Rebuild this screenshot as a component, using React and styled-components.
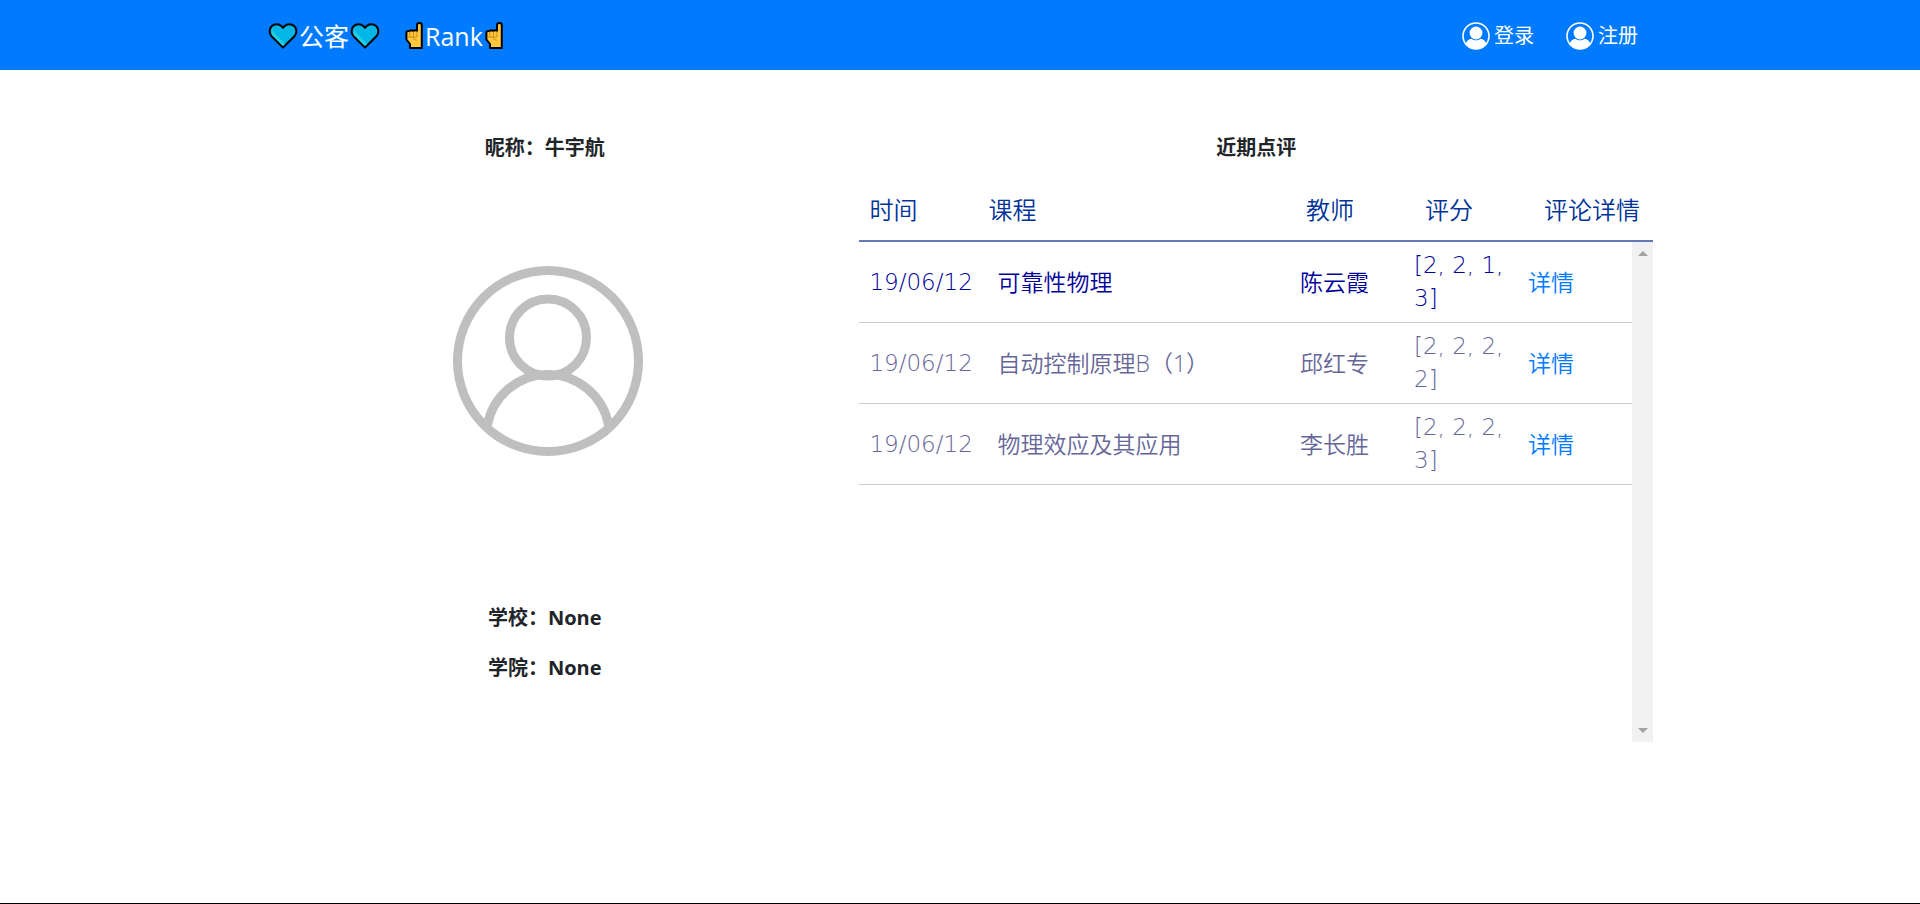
import React from "react";
import styled, { createGlobalStyle } from "styled-components";

const reviews = [
  { date: "19/06/12", course: "可靠性物理", teacher: "陈云霞", score: "[2, 2, 1, 3]", active: true },
  { date: "19/06/12", course: "自动控制原理B（1）", teacher: "邱红专", score: "[2, 2, 2, 2]" },
  { date: "19/06/12", course: "物理效应及其应用", teacher: "李长胜", score: "[2, 2, 2, 3]" },
];

const Heart = () => (
  <svg width="30" height="28" viewBox="0 0 30 28" aria-hidden="true">
    <path
      d="M15 25.5L3.6 14.2C1 11.4 1 6.8 3.6 4.2 6.4 1.4 11 1.5 13.6 4.2L15 5.7l1.4-1.5c2.6-2.7 7.2-2.8 10 0 2.6 2.6 2.6 7.2 0 10z"
      fill="#00b7e8"
      stroke="#000"
      strokeWidth="2"
      strokeLinejoin="round"
    />
    <path d="M4 6c0 4 6 8 13 16l-2 2L4 13z" fill="#25cfdf" />
  </svg>
);

const Finger = () => (
  <svg width="20" height="30" viewBox="0 0 20 30" aria-hidden="true">
    <path
      d="M13 10V4.2c0-3 4.8-3 4.8 0V27H6v-4l-3.6-4.5V12c0-1.6 1.8-2.5 3.2-1.8 1-1 2.7-1 3.6-.2 1-.8 2.6-.8 3.8 0z"
      fill="#ffc83d"
      stroke="#000"
      strokeWidth="2"
      strokeLinejoin="round"
    />
    <path
      d="M5.8 10.5v5.3M9.4 10.5v5.3M13 10v5.8M3.5 16h9.5M9 16c.2 2 1.6 3 3.8 3"
      fill="none"
      stroke="#d08a1c"
      strokeWidth="1"
    />
  </svg>
);

const UserIcon = () => (
  <svg width="28" height="28" viewBox="0 0 28 28" aria-hidden="true">
    <circle cx="14" cy="14" r="13" fill="none" stroke="#fff" strokeWidth="1.6" />
    <circle cx="14" cy="11" r="6.4" fill="#fff" />
    <path d="M3.5 22c1.2-3.4 3.3-5 6-5.2 2.7 2 6.3 2 9 0 2.7.2 4.8 1.8 6 5.2A13.5 13.5 0 0 1 3.5 22z" fill="#fff" />
  </svg>
);

const Avatar = () => (
  <svg width="192" height="192" viewBox="0 0 192 192" role="img" aria-label="头像">
    <g fill="none" stroke="#bfbfbf" strokeWidth="9">
      <circle cx="96" cy="96" r="90.5" />
      <circle cx="96" cy="72.5" r="38.5" />
      <path d="M35.5 160A61.5 61.5 0 0 1 156.5 160" />
    </g>
  </svg>
);

const App = () => {
  return (
    <>
      <GlobalStyle />
      <Page>
        <Navbar>
          <Inner>
            <Brand href="#">
              <Heart />
              公客
              <Heart />
            </Brand>
            <Brand href="#">
              <Finger />
              Rank
              <Finger />
            </Brand>
            <Account>
              <AccountLink href="#">
                <UserIcon />
                登录
              </AccountLink>
              <AccountLink href="#">
                <UserIcon />
                注册
              </AccountLink>
            </Account>
          </Inner>
        </Navbar>
        <Content>
          <Profile>
            <Title>昵称：牛宇航</Title>
            <Portrait>
              <Avatar />
            </Portrait>
            <Title>学校：None</Title>
            <Title>学院：None</Title>
          </Profile>
          <Reviews>
            <Title>近期点评</Title>
            <HeadTable>
              <colgroup>
                <Col $width="15%" />
                <Col $width="40%" />
                <Col $width="15%" />
                <Col $width="15%" />
                <Col $width="15%" />
              </colgroup>
              <thead>
                <tr>
                  <HeadCell>时间</HeadCell>
                  <HeadCell>课程</HeadCell>
                  <HeadCell>教师</HeadCell>
                  <HeadCell>评分</HeadCell>
                  <HeadCell>评论详情</HeadCell>
                </tr>
              </thead>
            </HeadTable>
            <Scroller>
              <Rows>
                <Table>
                  <colgroup>
                    <Col $width="128px" />
                    <Col />
                    <Col $width="114px" />
                    <Col $width="114px" />
                    <Col $width="114px" />
                  </colgroup>
                  <tbody>
                    {reviews.map((review) => (
                      <Row key={review.course} $active={review.active}>
                        <Cell $latin>{review.date}</Cell>
                        <Cell>{review.course}</Cell>
                        <Cell>{review.teacher}</Cell>
                        <Cell $latin>{review.score}</Cell>
                        <Cell>
                          <DetailLink href="#">详情</DetailLink>
                        </Cell>
                      </Row>
                    ))}
                  </tbody>
                </Table>
              </Rows>
              <Track>
                <Arrow />
                <Arrow $down />
              </Track>
            </Scroller>
          </Reviews>
        </Content>
        <Footer />
      </Page>
    </>
  );
};

const GlobalStyle = createGlobalStyle`
  * {
    box-sizing: border-box;
  }

  body {
    margin: 0;
    background: #fff;
    color: #212529;
    font-family: "Open Sans", "Noto Sans CJK SC", sans-serif;
  }

  a {
    text-decoration: none;
  }

  svg {
    display: block;
    flex: none;
  }
`;

const Page = styled.div`
  display: flex;
  flex-direction: column;
  min-height: 100vh;
`;

const Navbar = styled.nav`
  background: #007bff;
`;

const Inner = styled.div`
  display: flex;
  align-items: center;
  gap: 24px;
  max-width: 1416px;
  height: 70px;
  margin: 0 auto;
  padding: 2px 16px 0;
`;

const Brand = styled.a`
  display: flex;
  align-items: center;
  gap: 1px;
  color: #fff;
  font-size: 25px;
  line-height: 36px;
`;

const Account = styled.div`
  display: flex;
  gap: 32px;
  margin-left: auto;
  padding-right: 14px;
`;

const AccountLink = styled.a`
  display: flex;
  align-items: center;
  gap: 4px;
  color: #fff;
  font-size: 20px;
  line-height: 30px;
`;

const Content = styled.main`
  display: grid;
  grid-template-columns: 7fr 10fr;
  gap: 37px;
  flex: 1;
  width: 100%;
  max-width: 1418px;
  margin: 0 auto;
  padding: 63px 16px 0;
`;

const Profile = styled.section`
  display: flex;
  flex-direction: column;
  gap: 20px;
`;

const Title = styled.h2`
  margin: 0;
  font-size: 20px;
  font-weight: 700;
  line-height: 30px;
  text-align: center;
`;

const Portrait = styled.div`
  display: flex;
  justify-content: center;
  height: 400px;
  padding: 82px 0 0 6px;
`;

const Reviews = styled.section`
  min-width: 0;
`;

const Table = styled.table`
  width: 100%;
  border-collapse: collapse;
  table-layout: fixed;
  text-align: left;
`;

const HeadTable = styled(Table)`
  margin-top: 16px;
  border-bottom: 2px solid #6678b1;
`;

const Col = styled.col`
  width: ${({ $width }) => $width || "auto"};
`;

const HeadCell = styled.th`
  padding: 12px 0 12px 10px;
  color: #003399;
  font-size: 24px;
  font-weight: 350;
  line-height: 37px;
  white-space: nowrap;
`;

const Scroller = styled.div`
  display: flex;
  height: 500px;
`;

const Rows = styled.div`
  flex: 1;
  overflow: hidden;
`;

const Row = styled.tr`
  color: ${({ $active }) => ($active ? "#000099" : "#666699")};
  border-bottom: 1px solid #ccc;

  &:hover {
    color: #000099;
  }
`;

const Cell = styled.td`
  padding: 7px 0 7px 10px;
  font-family: ${({ $latin }) => ($latin ? '"DejaVu Sans", ' : "")}"Open Sans", "Noto Sans CJK SC", sans-serif;
  font-size: 23px;
  font-weight: ${({ $latin }) => ($latin ? 200 : 350)};
  line-height: 33px;
`;

const DetailLink = styled.a`
  color: #007bff;
`;

const Track = styled.div`
  display: flex;
  flex-direction: column;
  align-items: center;
  justify-content: space-between;
  width: 21px;
  padding: 9px 0;
  background: #f1f1f1;
`;

const Arrow = styled.span`
  border: 5px solid transparent;
  border-top: ${({ $down }) => ($down ? "5px solid #a3a3a3" : "0")};
  border-bottom: ${({ $down }) => ($down ? "0" : "5px solid #a3a3a3")};
`;

const Footer = styled.footer`
  border-bottom: 1px solid #000;
`;

export default App;
